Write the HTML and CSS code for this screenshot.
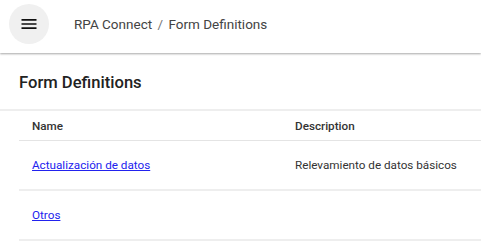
FILE: index.html
```html
<!DOCTYPE html>
<html>
<head>
  <title>RPA Connect</title>
  <link rel="stylesheet" href="styles.css">
</head>
<body>
    <!-- Top bar -->
    <header class="topbar">
      <button class="menu-button" aria-label="Menu">
        <svg width="20" height="20" viewBox="0 0 24 24"><path d="M3 18h18v-2H3v2zm0-5h18v-2H3v2zm0-7v2h18V6H3z" fill="#111"/></svg>
      </button>
      <nav class="crumbs">
        <span>RPA Connect</span>
        <span class="sep">/</span>
        <span>Form Definitions</span>
      </nav>
    </header>

    <h1 class="page-title">Form Definitions</h1>
    <div class="divider"></div>

    <!-- Form list -->
    <table class="form-table">
      <thead>
        <tr>
          <th class="col-name">Name</th>
          <th>Description</th>
        </tr>
      </thead>
      <tbody>
        <tr>
          <td><a href="#">Actualización de datos</a></td>
          <td>Relevamiento de datos básicos</td>
        </tr>
        <tr>
          <td><a href="#">Otros</a></td>
          <td></td>
        </tr>
      </tbody>
    </table>
</body>
</html>
```

FILE: styles.css
```css
body {
  font-family: Roboto, 'Liberation Sans', sans-serif;
  background-color: #fff;
  color: #333;
  margin: 0;
}
.topbar {
  height: 53px;
  display: flex;
  align-items: center;
  padding-left: 9px;
  box-shadow: 0 1px 2px rgba(0, 0, 0, 0.35);
  margin-bottom: 20px;
}
.menu-button {
  width: 40px;
  height: 40px;
  border-radius: 50%;
  border: none;
  background-color: #f0f0f0;
  padding: 0;
  display: flex;
  align-items: center;
  justify-content: center;
  margin-top: -5px;
}
.crumbs {
  margin-left: 25px;
  margin-top: -5px;
  font-size: 13.5px;
  color: #444;
}
.crumbs .sep {
  margin: 0 2px;
  color: #777;
}
.page-title {
  margin: 0;
  padding: 0 19px;
  font-size: 16.6px;
  line-height: 20px;
  font-weight: 500;
  color: #222;
}
.divider {
  height: 2px;
  background-color: #eee;
  margin-top: 16px;
}
.form-table {
  margin-left: 19px;
  width: calc(100% - 19px);
  border-collapse: collapse;
  font-size: 11.7px;
}
.form-table th {
  text-align: left;
  font-weight: 500;
  color: #333;
  height: 29px;
  padding: 0 0 0 13px;
  border-bottom: 1px solid #e4e4e4;
}
.form-table th.col-name,
.form-table td:first-child {
  width: 250px;
}
.form-table td {
  height: 48px;
  padding: 0 0 0 13px;
  border-bottom: 2px solid #eee;
  color: #333;
}
.form-table a {
  color: #2222ee;
}
```
